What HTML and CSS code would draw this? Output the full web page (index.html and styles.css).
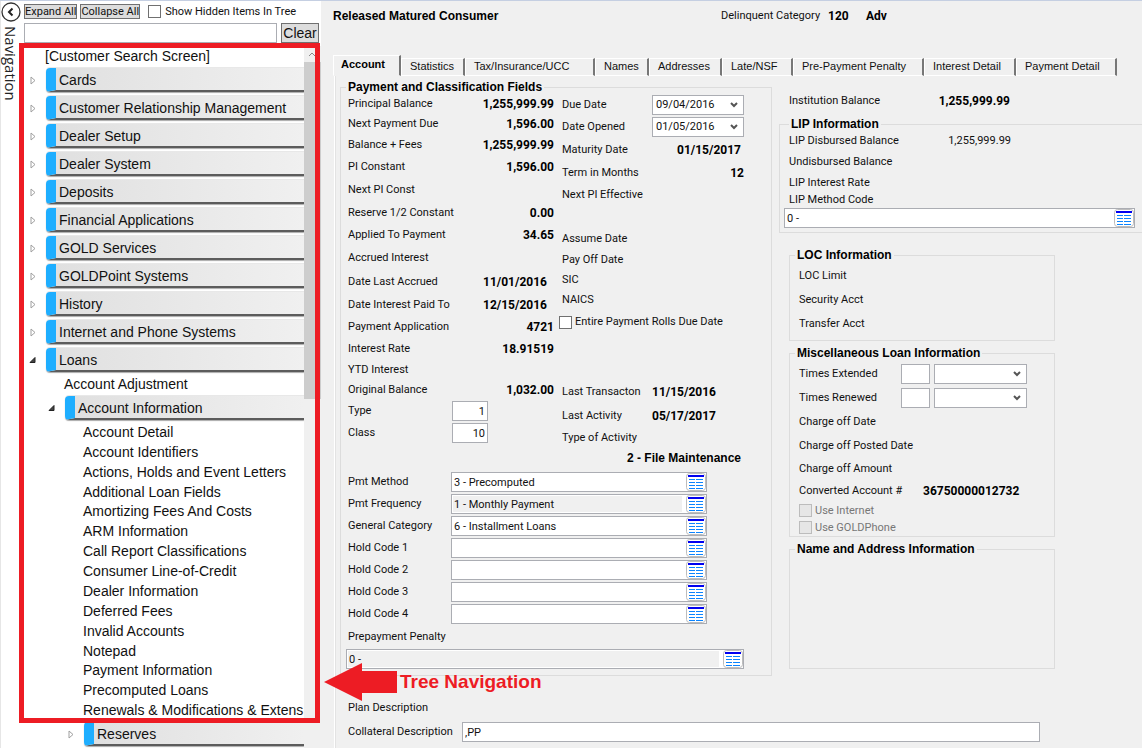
FILE: index.html
```html
<!DOCTYPE html>
<html lang="en">
<head>
<meta charset="utf-8">
<title>Loans - Account Detail</title>
<link rel="stylesheet" href="styles.css">
</head>
<body>
<svg class="defs" aria-hidden="true">
  <symbol id="grid" viewBox="0 0 20 18">
    <rect x="0.5" y="0.5" width="19" height="17" rx="3" fill="#fff" stroke="#bdbdbd"/>
    <path d="M2 3h16" stroke="#0000f0" stroke-width="2"/>
    <path d="M3 6.5h6M10 6.5h7M3 9.5h6M10 9.5h7M3 12.5h6M10 12.5h7M3 15.5h6M10 15.5h7" stroke="#0a84ff"/>
  </symbol>
  <symbol id="chev" viewBox="0 0 8 6"><path d="M1 1l3 3 3-3" fill="none" stroke="#555" stroke-width="2"/></symbol>
  <symbol id="closed" viewBox="0 0 8 9"><path d="M2 1v7l4-3.500z" fill="#fff" stroke="#a0a0a0"/></symbol>
  <symbol id="open" viewBox="0 0 8 9"><path d="M6 1.500v5H1z" fill="#444" stroke="#222"/></symbol>
</svg>
<div class="app">
  <aside class="sidebar">
    <div class="rail">
      <button class="back" aria-label="Collapse navigation"><svg viewBox="0 0 20 20"><circle cx="10" cy="10" r="9" fill="#fff" stroke="#333" stroke-width="1.300"/><path d="M11.500 6.500L8 10l3.500 3.500" fill="none" stroke="#222" stroke-width="2"/></svg></button>
      <span class="rail-text">Navigation</span>
    </div>
    <div class="nav">
      <div class="tools">
        <button class="tool">Expand All</button>
        <button class="tool">Collapse All</button>
        <label class="hidden-items"><input class="tick" type="checkbox">Show Hidden Items In Tree</label>
      </div>
      <div class="search">
        <input class="box" type="text" aria-label="Search tree">
        <button class="clear">Clear</button>
      </div>
      <div class="tree-area">
        <ul class="tree">
          <li><a class="leaf" href="#">[Customer Search Screen]</a></li>
          <li class="branch"><button class="toggle" aria-label="Expand"><svg class="tri"><use href="#closed"/></svg></button><a class="bar" href="#">Cards</a></li>
          <li class="branch"><button class="toggle" aria-label="Expand"><svg class="tri"><use href="#closed"/></svg></button><a class="bar" href="#">Customer Relationship Management</a></li>
          <li class="branch"><button class="toggle" aria-label="Expand"><svg class="tri"><use href="#closed"/></svg></button><a class="bar" href="#">Dealer Setup</a></li>
          <li class="branch"><button class="toggle" aria-label="Expand"><svg class="tri"><use href="#closed"/></svg></button><a class="bar" href="#">Dealer System</a></li>
          <li class="branch"><button class="toggle" aria-label="Expand"><svg class="tri"><use href="#closed"/></svg></button><a class="bar" href="#">Deposits</a></li>
          <li class="branch"><button class="toggle" aria-label="Expand"><svg class="tri"><use href="#closed"/></svg></button><a class="bar" href="#">Financial Applications</a></li>
          <li class="branch"><button class="toggle" aria-label="Expand"><svg class="tri"><use href="#closed"/></svg></button><a class="bar" href="#">GOLD Services</a></li>
          <li class="branch"><button class="toggle" aria-label="Expand"><svg class="tri"><use href="#closed"/></svg></button><a class="bar" href="#">GOLDPoint Systems</a></li>
          <li class="branch"><button class="toggle" aria-label="Expand"><svg class="tri"><use href="#closed"/></svg></button><a class="bar" href="#">History</a></li>
          <li class="branch"><button class="toggle" aria-label="Expand"><svg class="tri"><use href="#closed"/></svg></button><a class="bar" href="#">Internet and Phone Systems</a></li>
          <li class="branch"><button class="toggle" aria-label="Collapse"><svg class="tri"><use href="#open"/></svg></button><a class="bar" href="#">Loans</a>
            <ul class="sub">
              <li><a class="leaf" href="#">Account Adjustment</a></li>
              <li class="branch"><button class="toggle" aria-label="Collapse"><svg class="tri"><use href="#open"/></svg></button><a class="bar" href="#">Account Information</a>
                <ul class="sub pages">
                  <li><a class="leaf" href="#">Account Detail</a></li>
                  <li><a class="leaf" href="#">Account Identifiers</a></li>
                  <li><a class="leaf" href="#">Actions, Holds and Event Letters</a></li>
                  <li><a class="leaf" href="#">Additional Loan Fields</a></li>
                  <li><a class="leaf" href="#">Amortizing Fees And Costs</a></li>
                  <li><a class="leaf" href="#">ARM Information</a></li>
                  <li><a class="leaf" href="#">Call Report Classifications</a></li>
                  <li><a class="leaf" href="#">Consumer Line-of-Credit</a></li>
                  <li><a class="leaf" href="#">Dealer Information</a></li>
                  <li><a class="leaf" href="#">Deferred Fees</a></li>
                  <li><a class="leaf" href="#">Invalid Accounts</a></li>
                  <li><a class="leaf" href="#">Notepad</a></li>
                  <li><a class="leaf" href="#">Payment Information</a></li>
                  <li><a class="leaf" href="#">Precomputed Loans</a></li>
                  <li><a class="leaf" href="#">Renewals &amp; Modifications &amp; Extens</a></li>
                </ul>
                <ul class="sub">
                  <li class="branch"><button class="toggle" aria-label="Expand"><svg class="tri"><use href="#closed"/></svg></button><a class="bar" href="#">Reserves</a></li>
                </ul>
              </li>
            </ul>
          </li>
        </ul>
        <div class="scroll"><svg class="up" viewBox="0 0 16 16"><path d="M5 10l3-3 3 3" fill="none" stroke="#888"/></svg><div class="thumb"></div></div>
      </div>
    </div>
    <div class="frame"></div>
    <div class="callout">
      <svg class="arrow" viewBox="0 0 73 38"><path d="M0 19L38 0v8h35v22H38v8z" fill="#ed1c24"/></svg>
      <strong>Tree Navigation</strong>
    </div>
  </aside>

  <main class="main">
    <header class="head">
      <strong class="status">Released Matured Consumer</strong>
      <span class="delinq">Delinquent Category</span>
      <strong class="code">120</strong>
      <strong>Adv</strong>
    </header>
    <div class="tabs" role="tablist">
      <button class="tab active" role="tab" aria-selected="true">Account</button>
      <button class="tab" role="tab">Statistics</button>
      <button class="tab" role="tab">Tax/Insurance/UCC</button>
      <button class="tab" role="tab">Names</button>
      <button class="tab" role="tab">Addresses</button>
      <button class="tab" role="tab">Late/NSF</button>
      <button class="tab" role="tab">Pre-Payment Penalty</button>
      <button class="tab" role="tab">Interest Detail</button>
      <button class="tab" role="tab">Payment Detail</button>
    </div>
    <div class="panel">
      <div class="columns">
        <fieldset class="group payment">
          <legend>Payment and Classification Fields</legend>
          <div class="pair">
            <div class="col">
              <div class="row short"><span>Principal Balance</span><b>1,255,999.99</b></div>
              <div class="row short"><span>Next Payment Due</span><b>1,596.00</b></div>
              <div class="row"><span>Balance + Fees</span><b>1,255,999.99</b></div>
              <div class="row"><span>PI Constant</span><b>1,596.00</b></div>
              <div class="row tall"><span>Next PI Const</span></div>
              <div class="row"><span>Reserve 1/2 Constant</span><b>0.00</b></div>
              <div class="row"><span>Applied To Payment</span><b>34.65</b></div>
              <div class="row tall"><span>Accrued Interest</span></div>
              <div class="row tall"><span>Date Last Accrued</span><b class="date">11/01/2016</b></div>
              <div class="row"><span>Date Interest Paid To</span><b class="date">12/15/2016</b></div>
              <div class="row"><span>Payment Application</span><b>4721</b></div>
              <div class="row"><span>Interest Rate</span><b>18.91519</b></div>
              <div class="row short"><span>YTD Interest</span></div>
              <div class="row short"><span>Original Balance</span><b>1,032.00</b></div>
              <div class="row field"><label for="type">Type</label><input id="type" class="box num" value="1"></div>
              <div class="row field"><label for="class">Class</label><input id="class" class="box num" value="10"></div>
            </div>
            <div class="col">
              <div class="row dated"><label for="due">Due Date</label><div class="picker"><select id="due"><option>09/04/2016</option></select><svg><use href="#chev"/></svg></div></div>
              <div class="row dated"><label for="opened">Date Opened</label><div class="picker"><select id="opened"><option>01/05/2016</option></select><svg><use href="#chev"/></svg></div></div>
              <div class="row tall ending"><span>Maturity Date</span><b>01/15/2017</b></div>
              <div class="row"><span>Term in Months</span><b>12</b></div>
              <div class="row"><span>Next PI Effective</span></div>
              <div class="row"></div>
              <div class="row"><span>Assume Date</span></div>
              <div class="row short"><span>Pay Off Date</span></div>
              <div class="row short"><span>SIC</span></div>
              <div class="row short"><span>NAICS</span></div>
              <label class="row tall check rolls"><input class="tick" type="checkbox">Entire Payment Rolls Due Date</label>
              <div class="row tall"></div>
              <div class="row"></div>
              <div class="row tall dated"><span>Last Transacton</span><b>11/15/2016</b></div>
              <div class="row tall dated"><span>Last Activity</span><b>05/17/2017</b></div>
              <div class="row short"><span>Type of Activity</span></div>
              <div class="row short ending maint"><b>2 - File Maintenance</b></div>
            </div>
          </div>
          <div class="lookups">
            <div class="row coded"><label for="method">Pmt Method</label><div class="lookup"><input id="method" value="3 - Precomputed"><button aria-label="Choose"><svg><use href="#grid"/></svg></button></div></div>
            <div class="row coded"><label for="freq">Pmt Frequency</label><div class="lookup locked"><input id="freq" value="1 - Monthly Payment" readonly><button aria-label="Choose"><svg><use href="#grid"/></svg></button></div></div>
            <div class="row coded"><label for="cat">General Category</label><div class="lookup"><input id="cat" value="6 - Installment Loans"><button aria-label="Choose"><svg><use href="#grid"/></svg></button></div></div>
            <div class="row coded"><label for="hold1">Hold Code 1</label><div class="lookup"><input id="hold1"><button aria-label="Choose"><svg><use href="#grid"/></svg></button></div></div>
            <div class="row coded"><label for="hold2">Hold Code 2</label><div class="lookup"><input id="hold2"><button aria-label="Choose"><svg><use href="#grid"/></svg></button></div></div>
            <div class="row coded"><label for="hold3">Hold Code 3</label><div class="lookup"><input id="hold3"><button aria-label="Choose"><svg><use href="#grid"/></svg></button></div></div>
            <div class="row coded"><label for="hold4">Hold Code 4</label><div class="lookup"><input id="hold4"><button aria-label="Choose"><svg><use href="#grid"/></svg></button></div></div>
          </div>
          <label class="row tall inset" for="penalty">Prepayment Penalty</label>
          <div class="lookup locked"><input id="penalty" value="0 -" readonly><button aria-label="Choose"><svg><use href="#grid"/></svg></button></div>
        </fieldset>

        <div class="side">
          <div class="row institution"><span>Institution Balance</span><b>1,255,999.99</b></div>
          <fieldset class="group lip">
            <legend>LIP Information</legend>
            <div class="row short amount"><span>LIP Disbursed Balance</span><span>1,255,999.99</span></div>
            <div class="row amount"><span>Undisbursed Balance</span></div>
            <div class="row short amount"><span>LIP Interest Rate</span></div>
            <label class="code-label" for="lip">LIP Method Code</label>
            <div class="lookup"><input id="lip" value="0 -"><button aria-label="Choose"><svg><use href="#grid"/></svg></button></div>
          </fieldset>
          <fieldset class="group small loc">
            <legend>LOC Information</legend>
            <div class="row tall">LOC Limit</div>
            <div class="row tall">Security Acct</div>
            <div class="row tall">Transfer Acct</div>
          </fieldset>
          <fieldset class="group small misc">
            <legend>Miscellaneous Loan Information</legend>
            <div class="row tall times"><label for="ext">Times Extended</label><input id="ext" class="box"><div class="picker"><select aria-label="Extension type"><option></option></select><svg><use href="#chev"/></svg></div></div>
            <div class="row tall times"><label for="ren">Times Renewed</label><input id="ren" class="box"><div class="picker"><select aria-label="Renewal type"><option></option></select><svg><use href="#chev"/></svg></div></div>
            <div class="row tall">Charge off Date</div>
            <div class="row tall">Charge off Posted Date</div>
            <div class="row">Charge off Amount</div>
            <div class="row converted"><span>Converted Account #</span><b>36750000012732</b></div>
            <label class="check off"><input class="tick" type="checkbox" disabled>Use Internet</label>
            <label class="check off"><input class="tick" type="checkbox" disabled>Use GOLDPhone</label>
          </fieldset>
          <fieldset class="group small address">
            <legend>Name and Address Information</legend>
          </fieldset>
        </div>
      </div>
      <div class="foot">
        <div class="row tall"><span>Plan Description</span></div>
        <div class="row tall collateral"><label for="coll">Collateral Description</label><input id="coll" class="box" value=",PP"></div>
      </div>
    </div>
  </main>
</div>
</body>
</html>
```
FILE: styles.css
```css
* { box-sizing: border-box; }
body {
  margin: 0;
  background: #f0f0f0;
  color: #111;
  font: 11px/14px Roboto, "Liberation Sans", sans-serif;
}
button, input, select { font: inherit; color: inherit; margin: 0; border-radius: 0; }
button { padding: 0; }
ul { list-style: none; margin: 0; padding: 0; }
a { color: inherit; text-decoration: none; }
b, strong { font-size: 12px; font-weight: 700; color: #000; }
.defs { display: none; }

.app { display: flex; min-height: 100vh; border-top: 1px solid #c5cfe2; }

/* Sidebar */
.sidebar {
  position: relative;
  display: flex;
  flex: 0 0 321px;
  background: #fff;
  border-left: 1px solid #e6e6e6;
}
.rail { display: flex; flex-direction: column; flex: 0 0 20px; align-items: center; gap: 4px; padding-top: 1px; }
.back { width: 20px; height: 20px; border: 0; background: none; }
.back svg { display: block; width: 20px; height: 20px; }
.rail-text { writing-mode: vertical-rl; font: 15px/20px "Open Sans", sans-serif; color: #222; }
.nav { flex: 1; min-width: 0; display: flex; flex-direction: column; }
.tools { display: flex; align-items: center; gap: 3px; padding: 3px 0 4px 3px; height: 22px; }
.tool { height: 15px; line-height: 12px; padding: 0; border: 1px solid #707070; background: #ddd; white-space: nowrap; }
.hidden-items { display: flex; align-items: center; gap: 4px; padding-left: 5px; }
.tick {
  appearance: none;
  flex: none;
  width: 13px;
  height: 13px;
  border: 1px solid #707070;
  background: #fff;
}
.search { display: flex; gap: 4px; padding: 0 2px 0 3px; }
.search .box { flex: 1; min-width: 0; height: 20px; }
.clear { width: 38px; height: 20px; border: 1px solid #707070; background: #ddd; font: 14px/16px "Liberation Sans", sans-serif; }
.box { border: 1px solid #abadb3; background: #fff; padding: 0 2px; }

.tree-area { display: flex; flex: 1; padding-top: 3px; }
.tree { flex: 1; min-width: 0; overflow: hidden; padding-left: 24px; font: 14px/20px "Liberation Sans", sans-serif; }
.leaf { display: block; white-space: nowrap; }
.sub { grid-column: 1 / -1; }
.branch { display: grid; grid-template-columns: 25px minmax(0, 1fr); align-items: center; margin-left: -24px; }
.branch > .sub { padding-left: 43px; }
.branch .branch > .pages { height: 298px; display: grid; grid-auto-rows: minmax(0, 1fr); }
.toggle { height: 28px; border: 0; background: none; display: flex; align-items: center; padding-left: 8px; }
.tri { width: 8px; height: 9px; }
.bar {
  height: 24px;
  line-height: 24px;
  padding-left: 3px;
  white-space: nowrap;
  border-left: 10px solid #1eaeff;
  border-bottom: 2px solid #5c5c5c;
  border-radius: 4px 0 0 4px;
  background: linear-gradient(90deg, #e0e0e0, #f0f0f0);
  box-shadow: 0 1px 1px #aaa, 0 -1px 0 #e8e8e8;
}
.scroll { flex: 0 0 17px; background: #f0f0f0; }
.up { display: block; width: 16px; height: 16px; }
.thumb { height: 337px; background: #cdcdcd; }

/* Annotation over the tree */
.frame { position: absolute; top: 42px; left: 18px; width: 301px; height: 680px; border: 5px solid #ed1c24; pointer-events: none; }
.callout { position: absolute; z-index: 1; top: 662px; left: 323px; display: flex; align-items: center; gap: 3px; white-space: nowrap; }
.callout strong { font: bold 19px/22px "Liberation Sans", sans-serif; color: #ed1c24; }
.arrow { width: 73px; height: 38px; }

/* Main */
.main { flex: 1; min-width: 0; display: flex; flex-direction: column; padding-left: 12px; }
.head { display: flex; align-items: center; height: 54px; padding-bottom: 24px; }
.status { flex: 0 0 388px; font-family: "Liberation Sans", sans-serif; }
.delinq { flex: 0 0 107px; }
.code { flex: 0 0 38px; }
.tabs {
  display: grid;
  grid-template-columns: 68px 64px 130px 54px 73px 71px 131px 92px 101px;
  align-items: end;
  font-family: "Liberation Sans", sans-serif;
  height: 21px;
}
.tab {
  height: 18px;
  padding: 0 0 2px 8px;
  text-align: left;
  white-space: nowrap;
  border: solid;
  border-width: 1px 2px 1px 1px;
  border-color: #fff #777 #fff #fff;
  background: #f0f0f0;
  line-height: 14px;
}
.tab.active { height: 21px; padding: 0 0 4px 7px; font-weight: 700; border-bottom-color: #f0f0f0; color: #000; }
.panel { flex: 1; padding: 4px 0 0 5px; border-left: 1px solid #fff; box-shadow: inset 1px 0 0 #e3e3e3; margin-left: 1px; }
.columns { display: flex; align-items: flex-start; gap: 7px; }

.group { min-width: 0; margin: 0; padding: 0; border: 1px solid #dcdcdc; }
.group legend { margin-left: 5px; padding: 0 2px; font: bold 12px/14px "Liberation Sans", sans-serif; color: #000; }
.payment { flex: 0 0 432px; padding: 0 27px 6px 5px; }
.payment legend { margin-left: 0; }
.pair { display: grid; grid-template-columns: 208px minmax(0, 1fr); gap: 8px; }
.pair .col:first-child, .lookups { padding-left: 2px; }
.row { display: flex; align-items: center; justify-content: space-between; height: 22px; }
.short { height: 20px; }
.tall { height: 24px; }
.date { padding-right: 7px; }
.field { justify-content: flex-start; }
.field label { flex: 0 0 104px; }
.num { width: 36px; height: 20px; text-align: right; }
.dated { display: grid; grid-template-columns: 90px 1fr; }
.ending { padding-right: 3px; }
.maint { justify-content: flex-end; }
.maint b { font-family: "Liberation Sans", sans-serif; }
.inset { padding-left: 2px; }
.check { display: flex; align-items: center; justify-content: flex-start; gap: 3px; }
.rolls { margin-left: -3px; }

.picker { display: grid; grid-template-columns: minmax(0, 1fr) 13px; height: 20px; border: 1px solid #abadb3; background: #fff; }
.picker select { grid-area: 1 / 1 / 2 / 3; appearance: none; border: 0; background: none; padding: 0 3px; }
.picker svg { grid-area: 1 / 2; width: 8px; height: 6px; align-self: center; pointer-events: none; }

.lookups { width: 361px; padding-top: 3px; }
.coded label { flex: 0 0 103px; }
.lookup { display: flex; flex: 1; align-items: center; height: 20px; border: 1px solid #abadb3; background: #fff; }
.lookup input { flex: 1; min-width: 0; height: 16px; border: 0; padding: 0 1px; margin-left: 1px; background: none; }
.lookup button { width: 20px; height: 18px; border: 0; background: none; }
.lookup svg { display: block; width: 20px; height: 18px; }
.locked input { background: #f0f0f0; margin-right: 4px; }

.side { flex: 1; min-width: 0; padding-top: 10px; }
.institution { width: 231px; padding-left: 10px; }
.lip { margin-top: 5px; padding: 0 7px 4px 4px; border-right: 0; }
.amount { width: 227px; padding-left: 5px; }
.code-label { display: block; padding-left: 5px; }
.lip .lookup { margin-top: 1px; }
.small { width: 266px; margin-left: 10px; padding-left: 9px; }
.small legend { margin-left: -4px; }
.loc { margin-top: 15px; padding-top: 2px; padding-bottom: 4px; }
.misc { margin-top: 5px; padding-top: 2px; }
.times { display: grid; grid-template-columns: 102px 29px 93px; justify-content: start; }
.times .picker { margin-left: 4px; margin-right: -4px; }
.times .box { height: 20px; min-width: 0; }
.converted { justify-content: flex-start; }
.converted span { flex: 0 0 124px; }
.off { height: 17px; color: #777; }
.off .tick { border-color: #bcbcbc; background: #e6e6e6; }
.address { margin-top: 5px; height: 127px; }
.foot { padding: 20px 102px 0 8px; }
.collateral label { flex: 0 0 114px; }
.collateral .box { flex: 1; min-width: 0; height: 20px; }
```
